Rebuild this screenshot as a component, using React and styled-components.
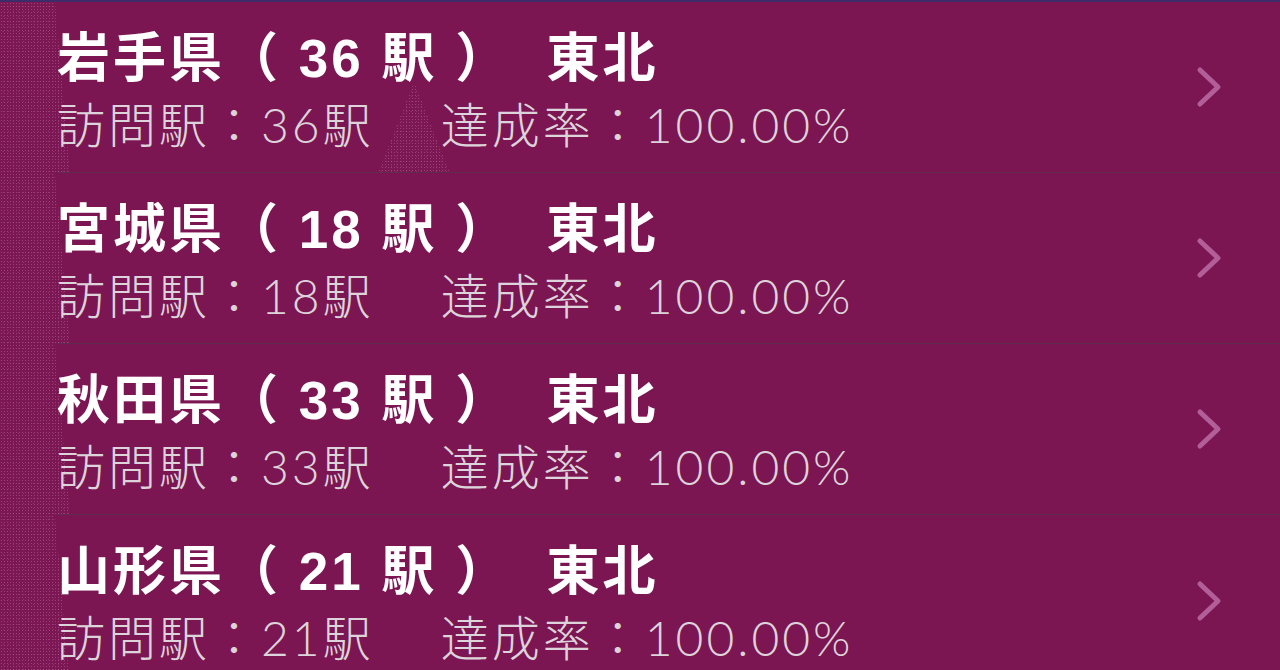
import styled, { createGlobalStyle } from "styled-components";

const GlobalStyle = createGlobalStyle`
  html, body {
    margin: 0;
    padding: 0;
    background: #7c1652;
  }
  body {
    font-family: "Liberation Sans", "Noto Sans CJK JP", sans-serif;
    -webkit-font-smoothing: antialiased;
  }
`;

const prefectures = [
  { name: "岩手県", count: 36, region: "東北", visited: 36, rate: "100.00%", peak: true },
  { name: "宮城県", count: 18, region: "東北", visited: 18, rate: "100.00%" },
  { name: "秋田県", count: 33, region: "東北", visited: 33, rate: "100.00%" },
  { name: "山形県", count: 21, region: "東北", visited: 21, rate: "100.00%" },
];

// fine speckle used for the background decorations
const dots = `
  radial-gradient(circle, rgba(255, 175, 225, 0.26) 0.6px, transparent 1px) 0 0 / 3px 3px,
  radial-gradient(circle, rgba(255, 175, 225, 0.18) 0.6px, transparent 1px) 1px 2px / 5px 5px,
  #7b1854
`;

const Screen = styled.main`
  min-height: 670px;
  border-top: 2px solid #3d2b6b;
  background: #7c1652;
  overflow: hidden;
`;

const List = styled.ul`
  list-style: none;
  margin: 0;
  padding: 0;
`;

const Row = styled.li`
  position: relative;
  height: 171px;
  box-sizing: border-box;
  padding-left: 57px;
  display: flex;

  &::before {
    content: "";
    position: absolute;
    left: 0;
    top: 0;
    bottom: 0;
    width: 72px;
    background: ${dots};
    clip-path: polygon(0 0, 55px 0, 70px 100%, 0 100%);
  }
`;

const Peak = styled.span`
  position: absolute;
  left: 378px;
  top: 80px;
  width: 72px;
  height: 91px;
  background: ${dots};
  clip-path: polygon(50% 0, 100% 100%, 0 100%);
`;

const Cell = styled.div`
  position: relative;
  flex: 1;
  display: flex;
  align-items: flex-start;
  padding-right: 56px;
  border-bottom: ${(p) => (p.$last ? "none" : "1.5px solid #5e2c4f")};
`;

const Text = styled.div`
  flex: 1;
  padding-top: 23px;
`;

const Title = styled.div`
  color: #ffffff;
  font-size: 53px;
  font-weight: 700;
  line-height: 68px;
  letter-spacing: 3px;
  white-space: pre;
`;

const Detail = styled.div`
  color: #dcd4da;
  font-family: "Lato", "Noto Sans CJK JP", sans-serif;
  font-size: 48px;
  font-weight: 300;
  line-height: 64px;
  letter-spacing: 3px;
  white-space: pre;
`;

const Chevron = styled.svg`
  align-self: center;
  width: 28px;
  height: 44px;
  flex: none;
`;

const PrefectureRow = ({ item, last }) => (
  <Row>
    {item.peak && <Peak />}
    <Cell $last={last}>
      <Text>
        <Title>{`${item.name}（ ${item.count} 駅 ）  ${item.region}`}</Title>
        <Detail>{`訪問駅：${item.visited}駅　 達成率：${item.rate}`}</Detail>
      </Text>
      <Chevron viewBox="0 0 28 44">
        <path
          d="M4 5 L22 22 L4 39"
          fill="none"
          stroke="#b25e99"
          strokeWidth="5"
          strokeLinecap="round"
          strokeLinejoin="round"
        />
      </Chevron>
    </Cell>
  </Row>
);

const App = () => {
  return (
    <Screen>
      <GlobalStyle />
      <List>
        {prefectures.map((item, index) => (
          <PrefectureRow
            key={item.name}
            item={item}
            last={index === prefectures.length - 1}
          />
        ))}
      </List>
    </Screen>
  );
};

export default App;
